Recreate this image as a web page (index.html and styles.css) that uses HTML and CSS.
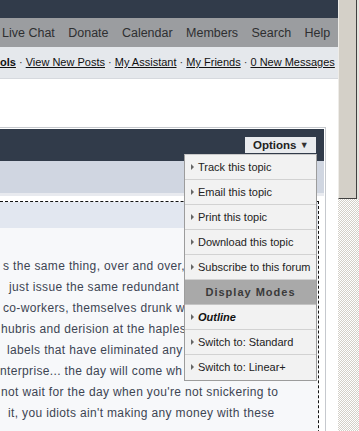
FILE: index.html
```html
<!DOCTYPE html>
<html lang="en">
<head>
    <meta charset="UTF-8">
    <meta name="viewport" content="width=device-width, initial-scale=1.0">
    <title>Topic</title>
    <link rel="stylesheet" href="styles.css">
</head>
<body>
    <div class="window">
        <div class="page">
            <div class="topbar"></div>

            <!-- main navigation -->
            <nav class="navbar">
                <a href="#">Live Chat</a>
                <a href="#">Donate</a>
                <a href="#">Calendar</a>
                <a href="#">Members</a>
                <a href="#">Search</a>
                <a href="#">Help</a>
            </nav>

            <!-- user links -->
            <div class="userlinks">
                <a href="#" class="strong">ols</a> &middot;
                <a href="#">View New Posts</a> &middot;
                <a href="#">My Assistant</a> &middot;
                <a href="#">My Friends</a> &middot;
                <a href="#">0 New Messages</a>
            </div>

            <div class="spacer"></div>

            <!-- topic box -->
            <div class="topic">
                <div class="topic-head">
                    <span class="options">Options <span class="arrow">&#9660;</span></span>

                    <ul class="options-menu">
                        <li><a href="#">Track this topic</a></li>
                        <li><a href="#">Email this topic</a></li>
                        <li><a href="#">Print this topic</a></li>
                        <li><a href="#">Download this topic</a></li>
                        <li><a href="#">Subscribe to this forum</a></li>
                        <li class="menu-title">Display Modes</li>
                        <li class="current"><a href="#">Outline</a></li>
                        <li><a href="#">Switch to: Standard</a></li>
                        <li><a href="#">Switch to: Linear+</a></li>
                    </ul>
                </div>
                <div class="topic-sub"></div>

                <div class="post">
                    <div class="post-head"></div>
                    <div class="post-body">
                        <p class="l1">s the same thing, over and over,</p>
                        <p class="l2">just issue the same redundant</p>
                        <p class="l3">co-workers, themselves drunk wi</p>
                        <p class="l4">hubris and derision at the haples</p>
                        <p class="l5">labels that have eliminated any</p>
                        <p class="l6">nterprise... the day will come wh</p>
                        <p class="l7">not wait for the day when you're not snickering to</p>
                        <p class="l8">it, you idiots ain't making any money with these</p>
                    </div>
                </div>
            </div>
        </div>

        <!-- window scrollbar -->
        <div class="scrollbar">
            <div class="thumb"></div>
        </div>
    </div>
</body>
</html>
```

FILE: styles.css
```css
* {
    box-sizing: border-box;
}

html, body {
    margin: 0;
    padding: 0;
    height: 100%;
    overflow: hidden;
}

body {
    font-family: "Liberation Sans", Arial, sans-serif;
    background-color: #fff;
}

.window {
    display: flex;
    width: 359px;
    height: 431px;
}

.page {
    width: 338px;
    overflow: hidden;
}

.topbar {
    height: 18px;
    background-color: #313b4a;
}

.navbar {
    height: 29px;
    background-color: #9b9da0;
    display: flex;
    align-items: center;
    gap: 13.4px;
    padding-left: 2px;
    white-space: nowrap;
}

.navbar a {
    color: #2e2f31;
    text-decoration: none;
    font-size: 12.5px;
}

.userlinks {
    height: 32px;
    background-color: #e5e8ec;
    border-bottom: 1px solid #d6d9de;
    font-size: 11px;
    line-height: 31px;
    white-space: nowrap;
    color: #333;
}

.userlinks a {
    color: #111;
}

.userlinks .strong {
    font-weight: bold;
}

.spacer {
    height: 48px;
}

.topic {
    width: 326px;
    border: 1px solid #c6c9ce;
    border-left: none;
    border-bottom: none;
    padding: 1px 1px 0 0;
}

.topic-head {
    position: relative;
    height: 32px;
    background-color: #313b4a;
    display: flex;
    justify-content: flex-end;
    align-items: flex-start;
    padding: 8px 8px 0 0;
}

.options {
    background-color: #e9ebee;
    color: #222;
    font-weight: bold;
    font-size: 11.5px;
    width: 71px;
    height: 16px;
    line-height: 16px;
    padding-left: 8px;
}

.options .arrow {
    font-size: 9px;
    color: #333;
    vertical-align: 1px;
}

.options-menu {
    position: absolute;
    left: 184px;
    top: 25px;
    width: 133px;
    margin: 0;
    padding: 0;
    list-style: none;
    background-color: #f2f2f2;
    border: 1px solid #9c9c9c;
    border-top-color: #c9c9c9;
    z-index: 2;
}

.options-menu li {
    height: 25px;
    line-height: 24px;
    border-bottom: 1px solid #d2d2d2;
    font-size: 11px;
    padding-left: 6px;
    white-space: nowrap;
}

.options-menu li:last-child {
    border-bottom: none;
}

.options-menu li a {
    color: #222;
    text-decoration: none;
}

.options-menu li a::before {
    content: "";
    display: inline-block;
    border-left: 3px solid #666;
    border-top: 3px solid transparent;
    border-bottom: 3px solid transparent;
    margin-right: 4px;
    vertical-align: 1px;
}

.options-menu .menu-title {
    background-color: #a9a9a9;
    color: #3a3a3a;
    font-weight: bold;
    font-size: 11px;
    letter-spacing: 1px;
    text-align: center;
    padding-left: 0;
    border-bottom-color: #c4c4c4;
}

.options-menu .current a {
    font-weight: bold;
    font-style: italic;
    color: #111;
}

.topic-sub {
    height: 35px;
    background-color: #d0d6e1;
    border-bottom: 3px solid #e8eaef;
}

.post {
    margin-top: 5px;
    width: 319px;
    border-top: 1px dashed #111;
    border-right: 1px dashed #111;
}

.post-head {
    height: 26px;
    background-color: #e2e7f0;
}

.post-body {
    background-color: #f7f8fa;
    padding-top: 28px;
    height: 250px;
}

.post-body p {
    margin: 0;
    height: 21px;
    line-height: 21px;
    font-size: 12px;
    letter-spacing: 0.35px;
    color: #3d4553;
    white-space: nowrap;
}

.post-body .l1 { padding-left: 3px; }
.post-body .l2 { padding-left: 9px; }
.post-body .l3 { padding-left: 3px; }
.post-body .l4 { padding-left: 1px; }
.post-body .l5 { padding-left: 7px; }
.post-body .l6 { padding-left: 0; }
.post-body .l7 { padding-left: 1px; }
.post-body .l8 { padding-left: 8px; }

.scrollbar {
    width: 21px;
    height: 431px;
    background: repeating-conic-gradient(#d4d0c8 0 25%, #fff 0 50%) 0 0 / 2px 2px;
}

.thumb {
    height: 199px;
    width: 19px;
    background-color: #d4d0c8;
    border-left: 1px solid #eeece8;
    border-right: 1px solid #404040;
    border-bottom: 1px solid #404040;
    box-shadow: 2px 0 0 #e6e3de;
}
```
